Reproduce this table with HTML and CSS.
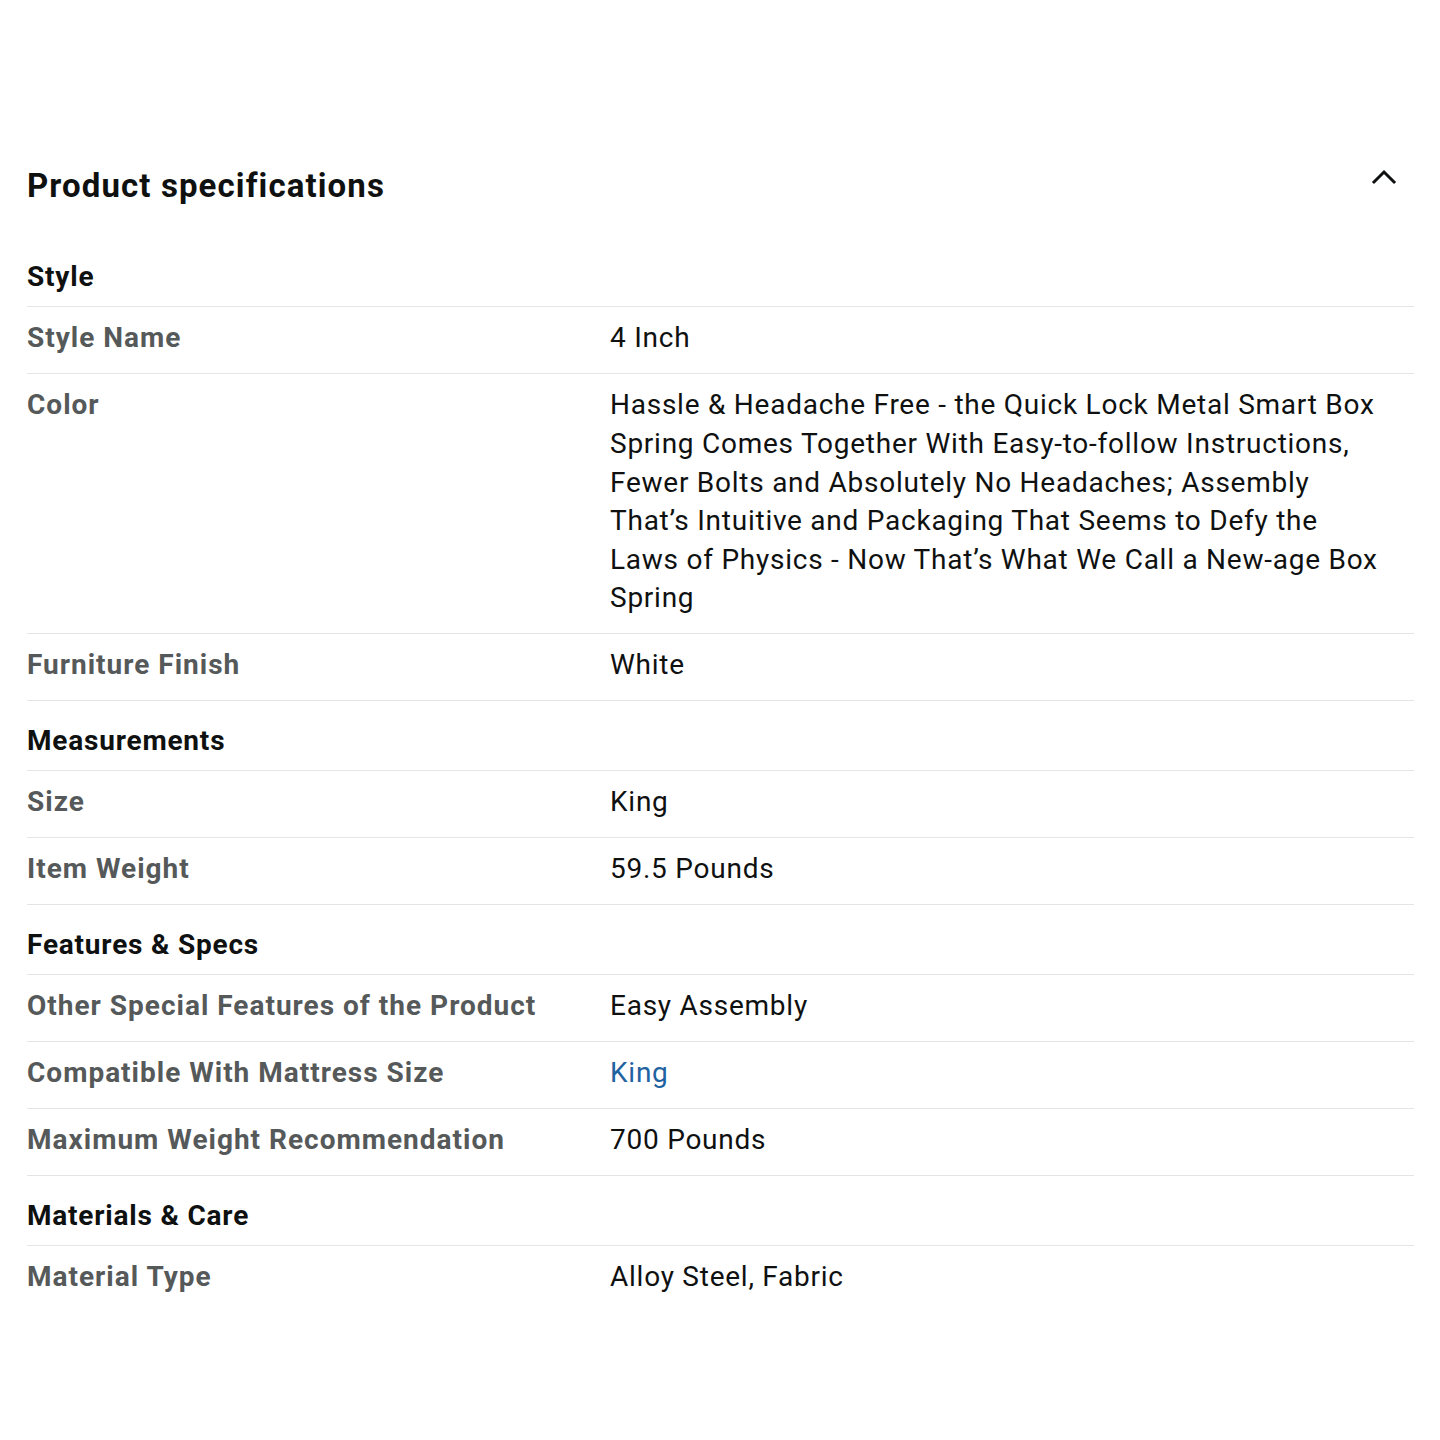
FILE: index.html
```html
<!DOCTYPE html>
<html lang="en">
<head>
<meta charset="utf-8">
<title>Product specifications</title>
<link rel="stylesheet" href="styles.css">
</head>
<body>
<div class="page">
  <div class="header">
    <h2 class="title">Product specifications</h2>
    <button class="toggle" aria-label="Collapse">
      <svg width="28" height="28" viewBox="0 0 28 28" fill="none" stroke="#0f1111" stroke-width="3" stroke-linecap="square"><path d="M4 19 L14 9 L24 19"/></svg>
    </button>
  </div>
  <div class="specs">
    <div class="section">Style</div>
    <div class="row"><div class="label">Style Name</div><div class="value">4 Inch</div></div>
    <div class="row"><div class="label">Color</div><div class="value">Hassle &amp; Headache Free - the Quick Lock Metal Smart Box Spring Comes Together With Easy-to-follow Instructions, Fewer Bolts and Absolutely No Headaches; Assembly That’s Intuitive and Packaging That Seems to Defy the Laws of Physics - Now That’s What We Call a New-age Box Spring</div></div>
    <div class="row"><div class="label">Furniture Finish</div><div class="value">White</div></div>

    <div class="section">Measurements</div>
    <div class="row"><div class="label">Size</div><div class="value">King</div></div>
    <div class="row"><div class="label">Item Weight</div><div class="value">59.5 Pounds</div></div>

    <div class="section">Features &amp; Specs</div>
    <div class="row"><div class="label">Other Special Features of the Product</div><div class="value">Easy Assembly</div></div>
    <div class="row"><div class="label">Compatible With Mattress Size</div><div class="value"><a class="link" href="#">King</a></div></div>
    <div class="row"><div class="label">Maximum Weight Recommendation</div><div class="value">700 Pounds</div></div>

    <div class="section">Materials &amp; Care</div>
    <div class="row last"><div class="label">Material Type</div><div class="value">Alloy Steel, Fabric</div></div>
  </div>
</div>
</body>
</html>
```
FILE: styles.css
```css
html, body {
  margin: 0;
  padding: 0;
  background: #ffffff;
}
body {
  font-family: Roboto, "Liberation Sans", sans-serif;
  color: #0f1111;
}
.page {
  padding: 166px 26px 0 27px;
}
.header {
  display: flex;
  justify-content: space-between;
  align-items: flex-start;
}
.title {
  margin: 0;
  font-size: 33px;
  line-height: 40px;
  font-weight: 700;
  letter-spacing: 1.1px;
  color: #0f1111;
}
.toggle {
  border: 0;
  background: none;
  padding: 0;
  margin: -3px 16px 0 0;
  width: 28px;
  height: 28px;
  cursor: pointer;
}
.specs {
  margin-top: 31px;
}
.section {
  padding: 21px 0 10px;
  font-size: 28px;
  line-height: 38px;
  font-weight: 700;
  letter-spacing: 0.8px;
  color: #0f1111;
  border-bottom: 1px solid #e3e6e6;
}
.row {
  display: grid;
  grid-template-columns: 583px 1fr;
  padding: 12.4px 0 15px;
  border-bottom: 1px solid #e3e6e6;
  font-size: 28px;
  line-height: 38.6px;
}
.row.last {
  border-bottom: 0;
}
.label {
  font-weight: 700;
  letter-spacing: 1px;
  color: #565959;
}
.value {
  padding-right: 30px;
  letter-spacing: 0.75px;
  color: #0f1111;
}
.link {
  color: #2162a1;
  text-decoration: none;
}
```
